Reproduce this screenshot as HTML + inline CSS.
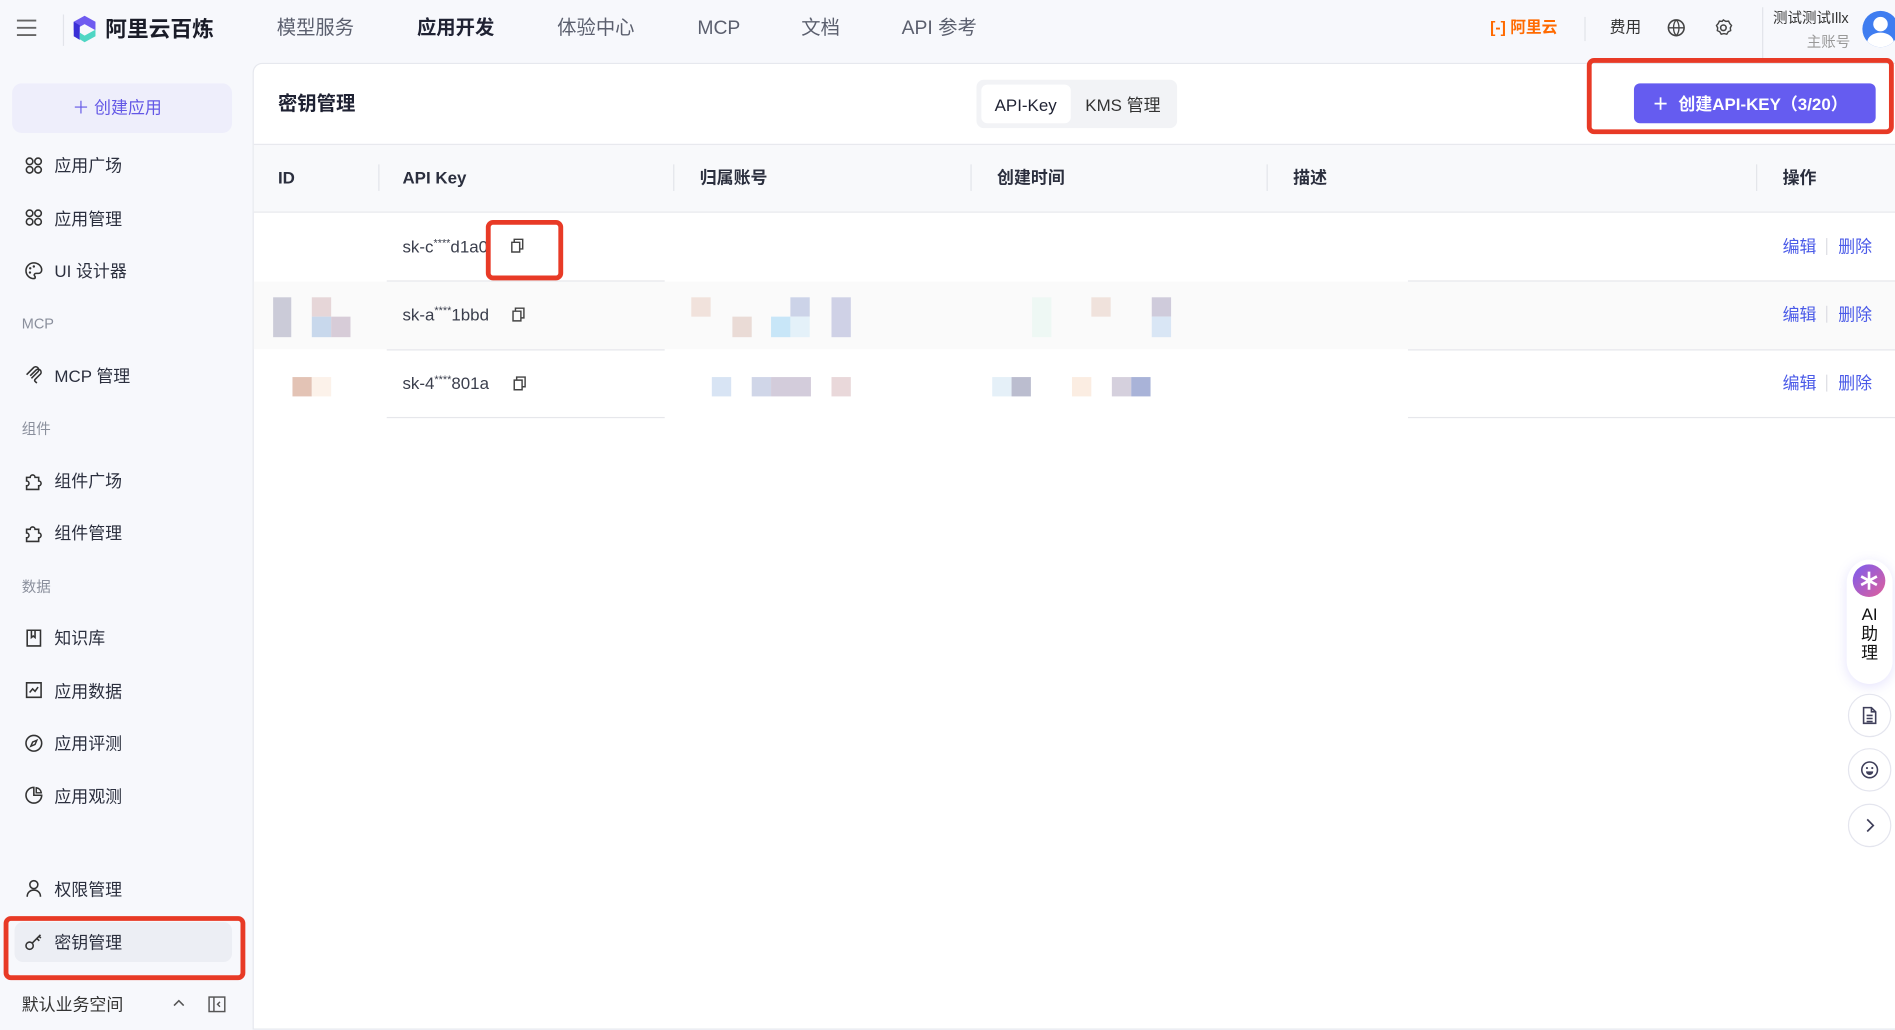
<!DOCTYPE html>
<html><head><meta charset="utf-8"><style>
*{box-sizing:border-box;margin:0;padding:0}
html,body{width:1895px;height:1022px;overflow:hidden;background:#f7f8fc}
#w{position:absolute;left:0;top:0;width:1568px;height:846px;transform:scale(1.20855);transform-origin:0 0;font-family:"Liberation Sans","Noto Sans CJK SC",sans-serif;color:#1f2233;background:#f7f8fc}
.a{position:absolute;white-space:nowrap;line-height:20px}
.nav{font-size:16px;color:#5b5f6e;top:13px;line-height:22px}
.mi{font-size:14px;color:#2b2f3e;left:45px}
.ic{left:20px;width:16px;height:16px}
.sec{font-size:12px;color:#8a8f9c;left:18px}
.th{font-size:14px;font-weight:bold;color:#2b2f3e;top:137px}
.vd{width:1px;height:22px;background:#e3e5ea;top:136px}
.key{font-size:14px;color:#3a3e4c;left:333px}
.key sup{font-size:9px;line-height:0;vertical-align:5px}
.lk{font-size:14px;color:#4a5ae8}
.px{position:absolute}
.rb{position:absolute;border:4px solid #e83a26;border-radius:6px}
.circ{position:absolute;left:1529px;width:36px;height:36px;border-radius:50%;border:1px solid #e4e5ee;background:#fff}
</style></head><body><div id="w">
<svg class="a" style="left:13px;top:15px" width="18" height="16"><path d="M1 2h16M1 8h16M1 14h16" stroke="#666" stroke-width="1.6"/></svg>
<div class="a" style="left:52px;top:12px;width:1px;height:26px;background:#e2e4ea"></div>
<svg class="a" style="left:58px;top:12px" width="24" height="24" viewBox="0 0 24 24"><path d="M12 1L3 6v7l9-5 9 5V6z" fill="#6f5bf0"/><path d="M3 6v12l5 3V9z" fill="#3a2fd6"/><path d="M8 15l4 2.5 9-5V18l-9 5-4-2.5z" fill="#4fd6c4"/></svg>
<div class="a" style="left:87px;top:12px;font-size:18px;font-weight:bold;color:#1a1c28;line-height:24px">阿里云百炼</div>
<div class="a nav" style="left:229px">模型服务</div>
<div class="a nav" style="left:345px;color:#1f2233;font-weight:bold">应用开发</div>
<div class="a nav" style="left:461px">体验中心</div>
<div class="a nav" style="left:577px">MCP</div>
<div class="a nav" style="left:663px">文档</div>
<div class="a nav" style="left:746px">API 参考</div>
<div class="a" style="left:1233px;top:13px;font-size:13px;font-weight:bold;color:#ff6a00">[-] 阿里云</div>
<div class="a" style="left:1311px;top:14px;width:1px;height:20px;background:#e2e4ea"></div>
<div class="a" style="left:1332px;top:13px;font-size:13px;color:#333">费用</div>
<svg class="a" style="left:1379px;top:15px" width="16" height="16" viewBox="0 0 16 16"><circle cx="8" cy="8" r="6.5" fill="none" stroke="#444" stroke-width="1.3"/><path d="M1.5 8h13M8 1.5c-3 3-3 10 0 13M8 1.5c3 3 3 10 0 13" fill="none" stroke="#444" stroke-width="1.1"/></svg>
<svg class="a" style="left:1418px;top:15px" width="16" height="16" viewBox="0 0 16 16"><circle cx="8" cy="8" r="2.3" fill="none" stroke="#444" stroke-width="1.3"/><path d="M8 1.5l2 1.2 2.3-.2 1 2 1.4 1.6-1 2 .3 2.2-2 1-1.2 2-2.3-.5-2.3.5-1.2-2-2-1 .3-2.2-1-2 1.4-1.6 1-2 2.3.2z" fill="none" stroke="#444" stroke-width="1.2"/></svg>
<div class="a" style="left:1458px;top:6px;width:1px;height:44px;background:#e2e4ea"></div>
<div class="a" style="left:1467px;top:5px;font-size:12px;color:#333">测试测试Illx</div>
<div class="a" style="left:1495px;top:25px;font-size:12px;color:#999">主账号</div>
<div class="a" style="left:1541px;top:9px;width:30px;height:30px;border-radius:50%;background:#3f7df0;overflow:hidden"><div style="position:absolute;left:9px;top:5px;width:12px;height:12px;border-radius:50%;background:#fff"></div><div style="position:absolute;left:4px;top:18px;width:22px;height:16px;border-radius:50%;background:#fff"></div></div>
<div class="a" style="left:10px;top:69px;width:182px;height:41px;border-radius:8px;background:#eeeefb"></div>
<div class="a" style="left:60px;top:79px;font-size:14px;color:#6357e6">＋ 创建应用</div>
<svg class="a ic" style="top:129px" viewBox="0 0 16 16"><g fill="none" stroke="#333" stroke-width="1.3"><circle cx="4.5" cy="4.5" r="2.7"/><circle cx="11.5" cy="4.5" r="2.7"/><circle cx="4.5" cy="11.5" r="2.7"/><circle cx="11.5" cy="11.5" r="2.7"/></g></svg>
<div class="a mi" style="top:127px">应用广场</div>
<svg class="a ic" style="top:172px" viewBox="0 0 16 16"><g fill="none" stroke="#333" stroke-width="1.3"><circle cx="4.5" cy="4.5" r="2.7"/><circle cx="11.5" cy="4.5" r="2.7"/><circle cx="4.5" cy="11.5" r="2.7"/><circle cx="11.5" cy="11.5" r="2.7"/></g></svg>
<div class="a mi" style="top:171px">应用管理</div>
<svg class="a ic" style="top:216px" viewBox="0 0 16 16"><path d="M8 1.5a6.5 6.5 0 1 0 0 13c1.5 0 1.3-1.6.6-2.3-.7-.8 0-2 1.2-2h2c1.6 0 2.7-1.3 2.7-2.8C14.5 4.2 11.6 1.5 8 1.5z" fill="none" stroke="#333" stroke-width="1.3"/><circle cx="5" cy="6" r="1" fill="#333"/><circle cx="8" cy="4.5" r="1" fill="#333"/><circle cx="4.8" cy="9.5" r="1" fill="#333"/></svg>
<div class="a mi" style="top:214px">UI 设计器</div>
<div class="a sec" style="top:258px">MCP</div>
<svg class="a ic" style="top:302px" viewBox="0 0 16 16"><path d="M2 8l6-6a2.5 2.5 0 0 1 3.5 3.5L6 11M5 9l5-5a2.5 2.5 0 0 1 3.5 3.5L9 12a1 1 0 0 0 0 1.5L10.5 15" fill="none" stroke="#333" stroke-width="1.3"/></svg>
<div class="a mi" style="top:301px">MCP 管理</div>
<div class="a sec" style="top:345px">组件</div>
<svg class="a ic" style="top:390px" viewBox="0 0 16 16"><path d="M2 5h3a2 2 0 1 1 4 0h3v3a2 2 0 1 1 0 4v3H2v-3a2 2 0 1 0 0-4z" fill="none" stroke="#333" stroke-width="1.3"/></svg>
<div class="a mi" style="top:388px">组件广场</div>
<svg class="a ic" style="top:433px" viewBox="0 0 16 16"><path d="M2 5h3a2 2 0 1 1 4 0h3v3a2 2 0 1 1 0 4v3H2v-3a2 2 0 1 0 0-4z" fill="none" stroke="#333" stroke-width="1.3"/></svg>
<div class="a mi" style="top:431px">组件管理</div>
<div class="a sec" style="top:476px">数据</div>
<svg class="a ic" style="top:520px" viewBox="0 0 16 16"><path d="M2.5 1.5h11v13h-11zM6 1.5v6l1.5-1.2L9 7.5v-6" fill="none" stroke="#333" stroke-width="1.3"/></svg>
<div class="a mi" style="top:518px">知识库</div>
<svg class="a ic" style="top:563px" viewBox="0 0 16 16"><path d="M2 2h12v12H2zM4.5 10l2.5-3 2 2 2.5-3.5" fill="none" stroke="#333" stroke-width="1.3"/></svg>
<div class="a mi" style="top:562px">应用数据</div>
<svg class="a ic" style="top:607px" viewBox="0 0 16 16"><circle cx="8" cy="8" r="6.5" fill="none" stroke="#333" stroke-width="1.3"/><path d="M10.5 5.5L9 9 5.5 10.5 7 7z" fill="none" stroke="#333" stroke-width="1.2"/></svg>
<div class="a mi" style="top:605px">应用评测</div>
<svg class="a ic" style="top:650px" viewBox="0 0 16 16"><path d="M8 1.5a6.5 6.5 0 1 0 6.5 6.5H8z" fill="none" stroke="#333" stroke-width="1.3"/><path d="M10 1.8V6h4.2A4.8 4.8 0 0 0 10 1.8z" fill="none" stroke="#333" stroke-width="1.2"/></svg>
<div class="a mi" style="top:649px">应用观测</div>
<svg class="a ic" style="top:727px" viewBox="0 0 16 16"><circle cx="8" cy="5" r="3.3" fill="none" stroke="#333" stroke-width="1.3"/><path d="M2.5 15c0-3.5 2.5-5.5 5.5-5.5s5.5 2 5.5 5.5" fill="none" stroke="#333" stroke-width="1.3"/></svg>
<div class="a mi" style="top:726px">权限管理</div>
<div class="a" style="left:12px;top:763px;width:180px;height:33px;border-radius:7px;background:#eceef4"></div>
<svg class="a ic" style="top:771px" viewBox="0 0 16 16"><circle cx="4.5" cy="11.5" r="3" fill="none" stroke="#333" stroke-width="1.3"/><path d="M6.7 9.3L13.5 2.5M10.5 5.5l2 2M12.3 3.7l1.5 1.5" fill="none" stroke="#333" stroke-width="1.3"/></svg>
<div class="a mi" style="top:770px">密钥管理</div>
<div class="rb" style="left:3px;top:758px;width:200px;height:53px"></div>
<div class="a" style="left:18px;top:821px;font-size:14px;color:#333">默认业务空间</div>
<svg class="a" style="left:142px;top:826px" width="12" height="8"><path d="M2 6l4-4 4 4" fill="none" stroke="#555" stroke-width="1.3"/></svg>
<svg class="a" style="left:172px;top:824px" width="15" height="14"><rect x="1" y="1" width="13" height="12" fill="none" stroke="#555" stroke-width="1.2"/><path d="M5 1v12M10 5l-2 2 2 2" fill="none" stroke="#555" stroke-width="1.2"/></svg>
<div class="a" style="left:209px;top:52px;width:1370px;height:800px;background:#fff;border:1px solid #e6e8ee;border-radius:8px 0 0 0"></div>
<div class="a" style="left:230px;top:76px;font-size:16px;font-weight:bold;color:#1f2233;line-height:22px">密钥管理</div>
<div class="a" style="left:808px;top:66px;width:166px;height:40px;border-radius:6px;background:#f2f3f6"></div>
<div class="a" style="left:812px;top:70px;width:74px;height:32px;border-radius:5px;background:#fff"></div>
<div class="a" style="left:823px;top:77px;font-size:14px;color:#1f2233">API-Key</div>
<div class="a" style="left:898px;top:77px;font-size:14px;color:#333">KMS 管理</div>
<div class="a" style="left:1352px;top:69px;width:200px;height:33px;border-radius:5px;background:#655cf0"></div>
<div class="a" style="left:1367px;top:76px;font-size:14px;color:#fff;font-weight:bold">＋&nbsp; 创建API-KEY（3/20）</div>
<div class="rb" style="left:1313px;top:48px;width:254px;height:63px"></div>
<div class="a" style="left:210px;top:119px;width:1358px;height:57px;background:#f8f9fb;border-top:1px solid #e8e9ee;border-bottom:1px solid #e8e9ee"></div>
<div class="a th" style="left:230px">ID</div>
<div class="a vd" style="left:313px"></div>
<div class="a th" style="left:333px">API Key</div>
<div class="a vd" style="left:557px"></div>
<div class="a th" style="left:579px">归属账号</div>
<div class="a vd" style="left:803px"></div>
<div class="a th" style="left:825px">创建时间</div>
<div class="a vd" style="left:1048px"></div>
<div class="a th" style="left:1070px">描述</div>
<div class="a vd" style="left:1453px"></div>
<div class="a th" style="left:1475px">操作</div>
<div class="a" style="left:210px;top:233px;width:1358px;height:56px;background:#fafafa"></div>
<div class="a" style="left:320px;top:232px;width:230px;height:1px;background:#e6e7eb"></div>
<div class="a" style="left:1165px;top:232px;width:403px;height:1px;background:#e6e7eb"></div>
<div class="a" style="left:320px;top:289px;width:230px;height:1px;background:#e6e7eb"></div>
<div class="a" style="left:1165px;top:289px;width:403px;height:1px;background:#e6e7eb"></div>
<div class="a" style="left:320px;top:345px;width:230px;height:1px;background:#e6e7eb"></div>
<div class="a" style="left:1165px;top:345px;width:403px;height:1px;background:#e6e7eb"></div>
<div class="a key" style="top:194px">sk-c<sup>****</sup>d1a0</div>
<div class="a key" style="top:250px">sk-a<sup>****</sup>1bbd</div>
<div class="a key" style="top:307px">sk-4<sup>****</sup>801a</div>
<svg class="a" style="left:422px;top:197px" width="12" height="13"><path d="M3.5 3V1h7v8H8.5M1.5 3.5h6.5v8H1.5z" fill="none" stroke="#444" stroke-width="1.2"/></svg>
<svg class="a" style="left:423px;top:254px" width="12" height="13"><path d="M3.5 3V1h7v8H8.5M1.5 3.5h6.5v8H1.5z" fill="none" stroke="#444" stroke-width="1.2"/></svg>
<svg class="a" style="left:424px;top:311px" width="12" height="13"><path d="M3.5 3V1h7v8H8.5M1.5 3.5h6.5v8H1.5z" fill="none" stroke="#444" stroke-width="1.2"/></svg>
<div class="rb" style="left:402px;top:182px;width:64px;height:50px"></div>
<div class="a lk" style="left:1475px;top:194px">编辑</div><div class="a" style="left:1511px;top:197px;width:1px;height:14px;background:#dcdde3"></div><div class="a lk" style="left:1521px;top:194px">删除</div>
<div class="a lk" style="left:1475px;top:250px">编辑</div><div class="a" style="left:1511px;top:253px;width:1px;height:14px;background:#dcdde3"></div><div class="a lk" style="left:1521px;top:250px">删除</div>
<div class="a lk" style="left:1475px;top:307px">编辑</div><div class="a" style="left:1511px;top:310px;width:1px;height:14px;background:#dcdde3"></div><div class="a lk" style="left:1521px;top:307px">删除</div>
<div class="px" style="left:226px;top:246px;width:15px;height:33px;background:#cbcbd8"></div>
<div class="px" style="left:258px;top:246px;width:16px;height:16px;background:#e6d6d8"></div>
<div class="px" style="left:258px;top:262px;width:16px;height:17px;background:#c8d8ec"></div>
<div class="px" style="left:274px;top:262px;width:16px;height:17px;background:#d7ccd8"></div>
<div class="px" style="left:572px;top:246px;width:16px;height:16px;background:#f1e2dc"></div>
<div class="px" style="left:606px;top:262px;width:16px;height:17px;background:#eadbd6"></div>
<div class="px" style="left:638px;top:262px;width:16px;height:17px;background:#c8e6f8"></div>
<div class="px" style="left:654px;top:246px;width:16px;height:16px;background:#ccd3e8"></div>
<div class="px" style="left:654px;top:262px;width:16px;height:17px;background:#e4f1f9"></div>
<div class="px" style="left:688px;top:246px;width:16px;height:33px;background:#cfd1e6"></div>
<div class="px" style="left:854px;top:246px;width:16px;height:33px;background:#eef8f4"></div>
<div class="px" style="left:903px;top:246px;width:16px;height:16px;background:#f0e2dc"></div>
<div class="px" style="left:953px;top:246px;width:16px;height:16px;background:#cfcbdb"></div>
<div class="px" style="left:953px;top:262px;width:16px;height:17px;background:#d9e6f5"></div>
<div class="px" style="left:242px;top:312px;width:16px;height:16px;background:#e3c3b5"></div>
<div class="px" style="left:258px;top:312px;width:16px;height:16px;background:#fcf2ea"></div>
<div class="px" style="left:589px;top:312px;width:16px;height:16px;background:#d8e4f4"></div>
<div class="px" style="left:622px;top:312px;width:16px;height:16px;background:#d0d6e8"></div>
<div class="px" style="left:638px;top:312px;width:33px;height:16px;background:#d3ccdb"></div>
<div class="px" style="left:688px;top:312px;width:16px;height:16px;background:#e9d8da"></div>
<div class="px" style="left:821px;top:312px;width:16px;height:16px;background:#e5f0f8"></div>
<div class="px" style="left:837px;top:312px;width:16px;height:16px;background:#bbbdcf"></div>
<div class="px" style="left:887px;top:312px;width:16px;height:16px;background:#fbede2"></div>
<div class="px" style="left:920px;top:312px;width:16px;height:16px;background:#d5d0dd"></div>
<div class="px" style="left:936px;top:312px;width:16px;height:16px;background:#a9b3d8"></div>
<div class="a" style="left:1528px;top:463px;width:38px;height:103px;border-radius:19px;background:#fff;box-shadow:0 2px 10px rgba(120,110,240,.2)"></div>
<div class="a" style="left:1533px;top:467px;width:27px;height:27px;border-radius:50%;background:linear-gradient(135deg,#7b5cf0,#e0609a)"></div>
<svg class="a" style="left:1537px;top:471px" width="19" height="19"><path d="M9.5 2v15M3 6l13 7M3 13l13-7" stroke="#fff" stroke-width="2.2"/></svg>
<div class="a" style="left:1539px;top:500px;font-size:14px;color:#111;line-height:16px;text-align:center;width:16px;white-space:normal">AI<br>助<br>理</div>
<div class="circ" style="top:574px"></div>
<svg class="a" style="left:1539px;top:584px" width="16" height="16"><path d="M3 1.5h6.5L13 5v9.5H3zM9.5 1.5V5H13M5.5 8h5M5.5 10.5h5M5.5 13h5" fill="none" stroke="#3f3f5a" stroke-width="1.3"/></svg>
<div class="circ" style="top:619px"></div>
<svg class="a" style="left:1539px;top:629px" width="16" height="16"><circle cx="8" cy="8" r="6.5" fill="none" stroke="#3f3f5a" stroke-width="1.3"/><circle cx="5.8" cy="6.5" r=".9" fill="#3f3f5a"/><circle cx="10.2" cy="6.5" r=".9" fill="#3f3f5a"/><path d="M5 9.3h6a3 3 0 0 1-6 0z" fill="#3f3f5a"/></svg>
<div class="circ" style="top:665px"></div>
<svg class="a" style="left:1541px;top:676px" width="12" height="14"><path d="M4 2l5 5-5 5" fill="none" stroke="#3f3f5a" stroke-width="1.4"/></svg>
</div></body></html>
